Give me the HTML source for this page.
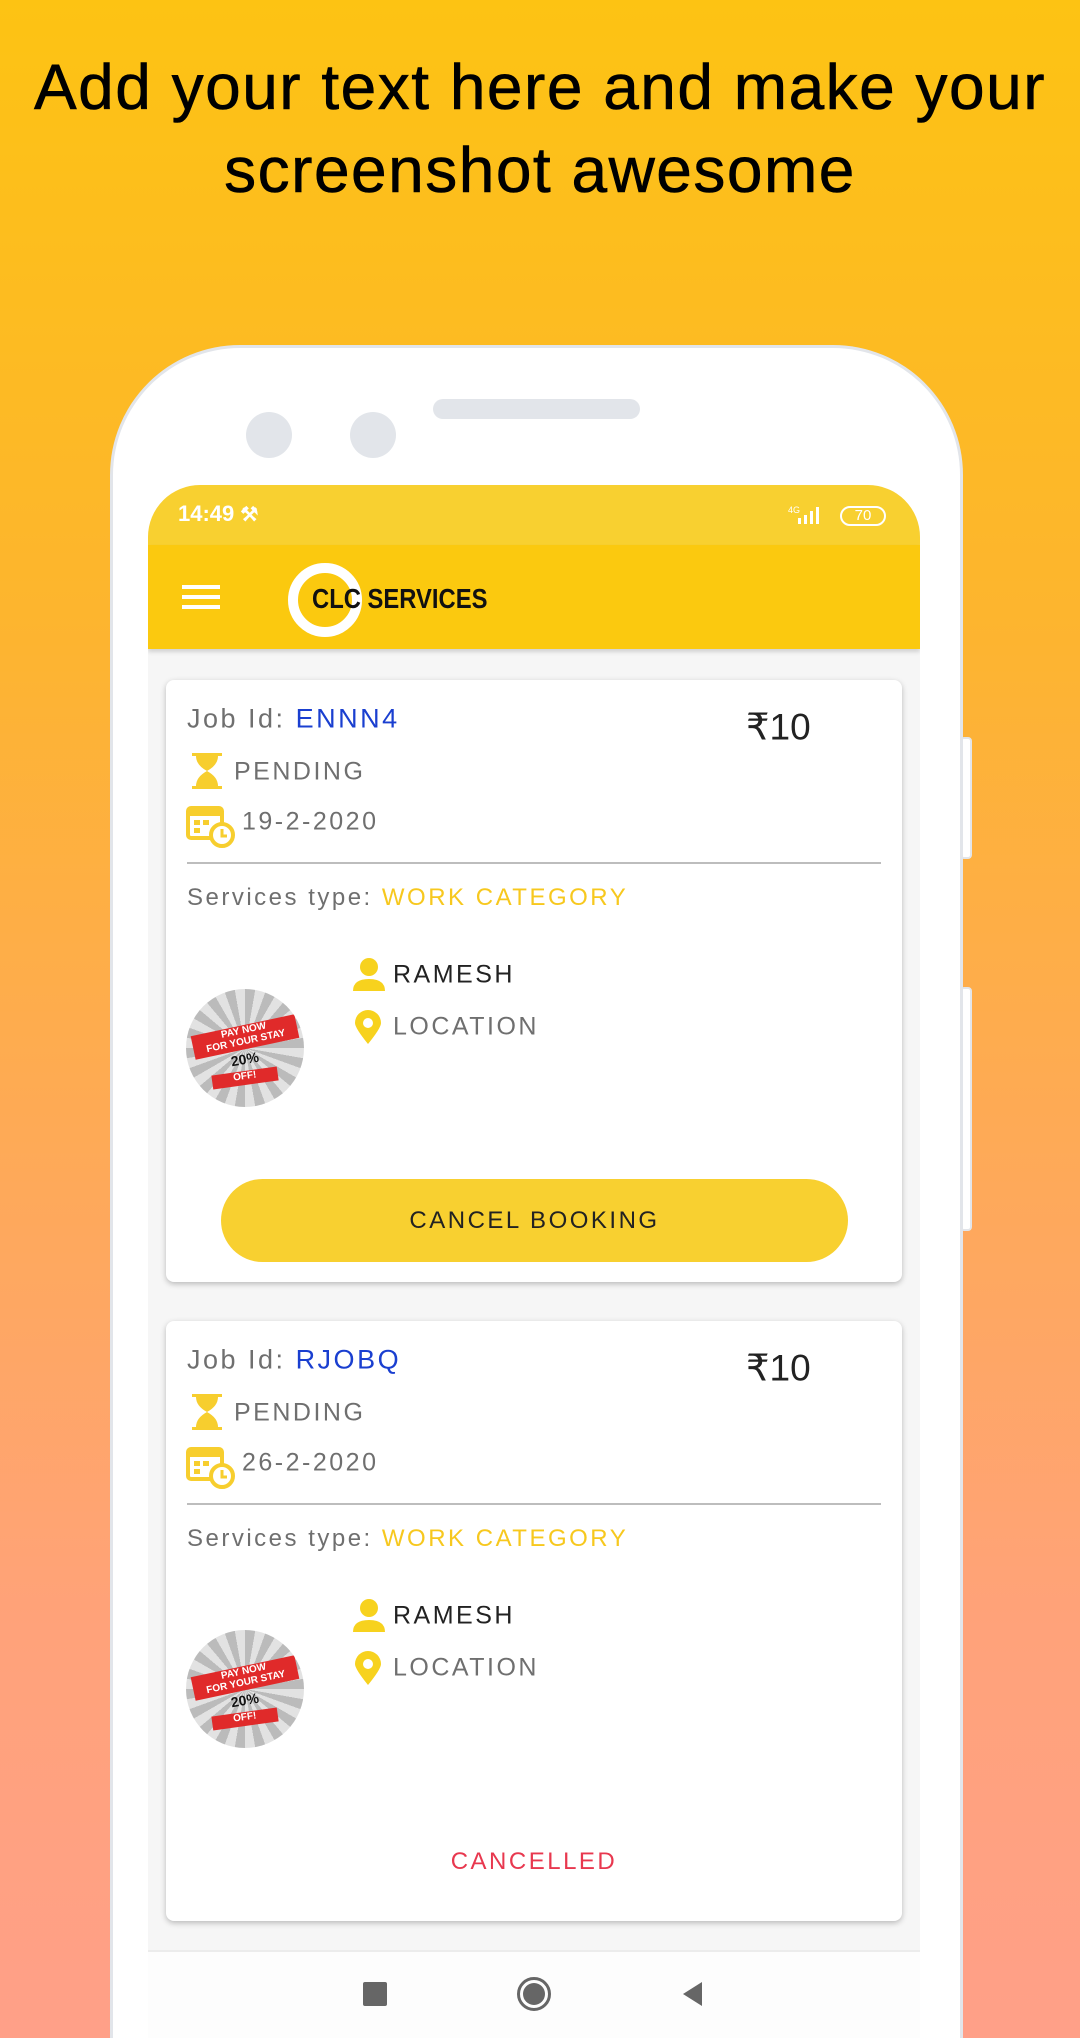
<!DOCTYPE html>
<html style="width:1080px;height:2038px;overflow:hidden;background:#FFA088"><head><meta charset="utf-8"><style>
*{margin:0;padding:0;box-sizing:border-box}
body{width:1080px;height:2038px;overflow:hidden;font-family:"Liberation Sans",sans-serif}
#root{position:relative;width:1080px;height:2038px;overflow:hidden;background:linear-gradient(180deg,#FDC313 0%,#FDB52E 30%,#FEAA55 55%,#FFA27A 80%,#FFA088 100%)}
.h{position:absolute;left:0;width:1080px;text-align:center;font-size:64px;color:#000;letter-spacing:1.5px;-webkit-text-stroke:0.6px #000}
.phone{position:absolute;left:110px;top:345px;width:853px;height:1693px;background:#fff;border:3px solid #e2e5ea;border-bottom:none;border-radius:130px 130px 0 0}
.btn{position:absolute;background:#fff;border:2px solid #e2e5ea;border-radius:4px}
.dot{position:absolute;width:46px;height:46px;border-radius:50%;background:#e2e5ea}
.screen{position:absolute;left:148px;top:485px;width:772px;height:1553px;background:#f6f6f6;border-radius:52px 52px 0 0;overflow:hidden}
.sb{position:absolute;left:0;top:0;width:772px;height:60px;background:#F8D030}
.ab{position:absolute;left:0;top:60px;width:772px;height:104px;background:#FBC90F;box-shadow:0 3px 4px rgba(0,0,0,.15)}
.card{position:absolute;left:18px;width:736px;background:#fff;border-radius:8px;box-shadow:0 2px 6px rgba(0,0,0,.25)}
.t{position:absolute;white-space:nowrap;letter-spacing:2.5px;transform:translateY(-50%)}
.g{color:#6f6f6f}
.nav{position:absolute;left:0;top:1465px;width:772px;height:90px;background:#fdfdfd;border-top:2px solid #ececec}
</style></head><body><div id="root">
<div class="h" style="top:50px">Add your text here and make your</div>
<div class="h" style="top:133px">screenshot awesome</div>
<div class="btn" style="left:960px;top:737px;width:12px;height:122px"></div>
<div class="btn" style="left:960px;top:987px;width:12px;height:244px"></div>
<div class="phone"></div>
<div class="dot" style="left:246px;top:412px"></div>
<div class="dot" style="left:350px;top:412px"></div>
<div style="position:absolute;left:433px;top:399px;width:207px;height:20px;border-radius:10px;background:#e2e5ea"></div>
<div class="screen">
 <div class="sb">
  <div style="position:absolute;left:30px;top:16px;color:#fff;font-size:22px;font-weight:bold">14:49 <span style="font-size:20px">&#x2692;</span></div>
  <div style="position:absolute;left:640px;top:20px;color:#fff;font-size:9px">4G</div>
  <svg style="position:absolute;left:648px;top:21px" width="28" height="18"><rect x="2" y="12" width="3" height="6" fill="#fff"/><rect x="8" y="9" width="3" height="9" fill="#fff"/><rect x="14" y="5" width="3" height="13" fill="#fff"/><rect x="20" y="1" width="3" height="17" fill="#fff"/></svg>
  <div style="position:absolute;left:692px;top:21px;width:46px;height:20px;border:2px solid #fff;border-radius:10px;color:#fff;font-size:15px;text-align:center;line-height:16px">70</div>
 </div>
 <div class="ab">
  <div style="position:absolute;left:34px;top:40px;width:38px;height:4px;background:#fff;box-shadow:0 10px 0 #fff,0 20px 0 #fff"></div>
  <div style="position:absolute;left:140px;top:18px;width:74px;height:74px;border-radius:50%;border:10px solid #fff"></div>
  <div style="position:absolute;left:164px;top:38px;font-size:28px;font-weight:bold;color:#111;transform:scaleX(.85);transform-origin:left">CLC SERVICES</div>
 </div>

 <div class="card" style="top:195px;height:602px">
  <div class="t g" style="left:21px;top:39px;font-size:27px">Job Id: <span style="color:#1a3fd0">ENNN4</span></div>
  <div class="t" style="left:580px;top:47px;font-size:37px;color:#222;letter-spacing:0">₹10</div>
  <svg style="position:absolute;left:26px;top:73px" width="30" height="36"><rect x="0" y="0" width="30" height="3" fill="#F7CE2E"/><rect x="0" y="33" width="30" height="3" fill="#F7CE2E"/><path d="M4 3H26Q26 12 15 18Q26 24 26 33H4Q4 24 15 18Q4 12 4 3Z" fill="#F7CE2E"/></svg>
  <div class="t g" style="left:68px;top:92px;font-size:25px">PENDING</div>
  <svg style="position:absolute;left:20px;top:123px" width="50" height="46"><rect x="2" y="5" width="34" height="30" rx="3" fill="none" stroke="#F7CE2E" stroke-width="4"/><rect x="2" y="5" width="34" height="8" fill="#F7CE2E"/><rect x="8" y="17" width="6" height="5" fill="#F7CE2E"/><rect x="17" y="17" width="6" height="5" fill="#F7CE2E"/><rect x="8" y="25" width="6" height="5" fill="#F7CE2E"/><circle cx="36" cy="32" r="11" fill="#fff" stroke="#F7CE2E" stroke-width="4"/><path d="M36 26V33H41" stroke="#F7CE2E" stroke-width="3" fill="none"/></svg>
  <div class="t g" style="left:76px;top:142px;font-size:25px">19-2-2020</div>
  <div style="position:absolute;left:21px;top:182px;width:694px;height:2px;background:#bdbdbd"></div>
  <div class="t g" style="left:21px;top:218px;font-size:24px">Services type: <span style="color:#F7C81E">WORK CATEGORY</span></div>
  <svg style="position:absolute;left:186px;top:277px" width="34" height="34"><circle cx="17" cy="10" r="9" fill="#F7D21E"/><path d="M1 34Q1 22 17 22Q33 22 33 34Z" fill="#F7D21E"/></svg>
  <div class="t" style="left:227px;top:295px;font-size:25px;color:#222">RAMESH</div>
  <svg style="position:absolute;left:189px;top:330px" width="26" height="34"><path d="M13 34Q0 18 0 13A13 13 0 0 1 26 13Q26 18 13 34Z" fill="#F7D21E"/><circle cx="13" cy="13" r="5" fill="#fff"/></svg>
  <div class="t g" style="left:227px;top:347px;font-size:25px">LOCATION</div>
  <div style="position:absolute;left:20px;top:309px;width:118px;height:118px;border-radius:50%;background:repeating-conic-gradient(#bbb 0 10deg,#e2e2e2 10deg 20deg);overflow:hidden">
   <div style="position:absolute;left:6px;top:36px;width:106px;height:24px;background:#e02a2a;transform:rotate(-12deg);color:#fff;font-size:10px;font-weight:bold;text-align:center;line-height:11px">PAY NOW<br>FOR YOUR STAY</div>
   <div style="position:absolute;left:12px;top:62px;width:94px;height:18px;color:#111;font-size:14px;font-weight:bold;text-align:center;transform:rotate(-10deg)">20%</div>
   <div style="position:absolute;left:26px;top:82px;width:66px;height:14px;background:#e02a2a;transform:rotate(-8deg);color:#fff;font-size:10px;font-weight:bold;text-align:center">OFF!</div>
  </div>
  <div style="position:absolute;left:55px;top:499px;width:627px;height:83px;border-radius:42px;background:#F8D030;text-align:center;line-height:83px;font-size:24px;color:#222;letter-spacing:2.5px">CANCEL BOOKING</div>
 </div>

 <div class="card" style="top:836px;height:600px">
  <div class="t g" style="left:21px;top:39px;font-size:27px">Job Id: <span style="color:#1a3fd0">RJOBQ</span></div>
  <div class="t" style="left:580px;top:47px;font-size:37px;color:#222;letter-spacing:0">₹10</div>
  <svg style="position:absolute;left:26px;top:73px" width="30" height="36"><rect x="0" y="0" width="30" height="3" fill="#F7CE2E"/><rect x="0" y="33" width="30" height="3" fill="#F7CE2E"/><path d="M4 3H26Q26 12 15 18Q26 24 26 33H4Q4 24 15 18Q4 12 4 3Z" fill="#F7CE2E"/></svg>
  <div class="t g" style="left:68px;top:92px;font-size:25px">PENDING</div>
  <svg style="position:absolute;left:20px;top:123px" width="50" height="46"><rect x="2" y="5" width="34" height="30" rx="3" fill="none" stroke="#F7CE2E" stroke-width="4"/><rect x="2" y="5" width="34" height="8" fill="#F7CE2E"/><rect x="8" y="17" width="6" height="5" fill="#F7CE2E"/><rect x="17" y="17" width="6" height="5" fill="#F7CE2E"/><rect x="8" y="25" width="6" height="5" fill="#F7CE2E"/><circle cx="36" cy="32" r="11" fill="#fff" stroke="#F7CE2E" stroke-width="4"/><path d="M36 26V33H41" stroke="#F7CE2E" stroke-width="3" fill="none"/></svg>
  <div class="t g" style="left:76px;top:142px;font-size:25px">26-2-2020</div>
  <div style="position:absolute;left:21px;top:182px;width:694px;height:2px;background:#bdbdbd"></div>
  <div class="t g" style="left:21px;top:218px;font-size:24px">Services type: <span style="color:#F7C81E">WORK CATEGORY</span></div>
  <svg style="position:absolute;left:186px;top:277px" width="34" height="34"><circle cx="17" cy="10" r="9" fill="#F7D21E"/><path d="M1 34Q1 22 17 22Q33 22 33 34Z" fill="#F7D21E"/></svg>
  <div class="t" style="left:227px;top:295px;font-size:25px;color:#222">RAMESH</div>
  <svg style="position:absolute;left:189px;top:330px" width="26" height="34"><path d="M13 34Q0 18 0 13A13 13 0 0 1 26 13Q26 18 13 34Z" fill="#F7D21E"/><circle cx="13" cy="13" r="5" fill="#fff"/></svg>
  <div class="t g" style="left:227px;top:347px;font-size:25px">LOCATION</div>
  <div style="position:absolute;left:20px;top:309px;width:118px;height:118px;border-radius:50%;background:repeating-conic-gradient(#bbb 0 10deg,#e2e2e2 10deg 20deg);overflow:hidden">
   <div style="position:absolute;left:6px;top:36px;width:106px;height:24px;background:#e02a2a;transform:rotate(-12deg);color:#fff;font-size:10px;font-weight:bold;text-align:center;line-height:11px">PAY NOW<br>FOR YOUR STAY</div>
   <div style="position:absolute;left:12px;top:62px;width:94px;height:18px;color:#111;font-size:14px;font-weight:bold;text-align:center;transform:rotate(-10deg)">20%</div>
   <div style="position:absolute;left:26px;top:82px;width:66px;height:14px;background:#e02a2a;transform:rotate(-8deg);color:#fff;font-size:10px;font-weight:bold;text-align:center">OFF!</div>
  </div>
  <div class="t" style="left:0;width:736px;text-align:center;top:541px;font-size:24px;color:#E8384F;letter-spacing:2.5px">CANCELLED</div>
 </div>

 <div class="nav">
  <div style="position:absolute;left:215px;top:30px;width:24px;height:24px;background:#666;border-radius:2px"></div>
  <div style="position:absolute;left:369px;top:25px;width:34px;height:34px;border-radius:50%;border:3px solid #666;padding:3px"><div style="width:100%;height:100%;border-radius:50%;background:#666"></div></div>
  <svg style="position:absolute;left:532px;top:29px" width="24" height="26"><path d="M22 1V25L3 13Z" fill="#666"/></svg>
 </div>
</div>
</div></body></html>
